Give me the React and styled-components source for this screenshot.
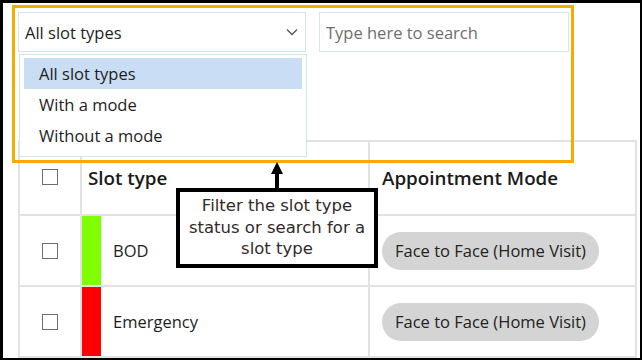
import React from "react";
import styled, { createGlobalStyle } from "styled-components";

const GlobalStyle = createGlobalStyle`
  body {
    margin: 0;
    background: #fff;
  }
  * {
    box-sizing: border-box;
  }
`;

const Frame = styled.div`
  position: relative;
  width: 642px;
  height: 360px;
  border-style: solid;
  border-color: #000;
  border-width: 3px 2px 2px 3px;
  padding: 9px 0 0 15px;
  overflow: hidden;
  background: #fff;
  font-family: "Open Sans", "Noto Sans", sans-serif;
  color: #1e1e1e;
`;

const Toolbar = styled.div`
  display: flex;
  gap: 13px;
  height: 40px;
`;

const SelectWrap = styled.div`
  position: relative;
  width: 288px;
`;

const SelectBox = styled.div`
  display: flex;
  align-items: center;
  justify-content: space-between;
  height: 40px;
  padding: 0 7px 0 6px;
  border: 1px solid #d3e4ea;
  font-size: 16.5px;
`;

const Chevron = styled.svg`
  width: 12px;
  height: 8px;
`;

const Menu = styled.ul`
  position: absolute;
  left: 1px;
  top: 42px;
  width: 288px;
  height: 103px;
  margin: 0;
  padding: 3px 4px 0 4px;
  list-style: none;
  background: #fff;
  border: 1px solid #d3e4ea;
  z-index: 2;
`;

const MenuItem = styled.li`
  height: 31px;
  display: flex;
  align-items: center;
  padding-left: 15px;
  font-size: 16.5px;
  background: ${(p) => (p.$active ? "#c9ddf4" : "transparent")};
`;

const SearchInput = styled.input`
  width: 250px;
  height: 40px;
  padding: 0 6px;
  border: 1px solid #d3e4ea;
  font-family: inherit;
  font-size: 16.5px;
  outline: none;
  &::placeholder {
    color: #6e6e6e;
  }
`;

const Table = styled.div`
  margin-top: 88px;
  width: 619px;
  display: grid;
  grid-template-columns: 62px 288px 267px;
  border-left: 2px solid #e2e2e2;
  border-top: 2px solid #e2e2e2;
`;

const Cell = styled.div`
  height: ${(p) => (p.$head ? "74px" : "71px")};
  border-right: 2px solid #e2e2e2;
  border-bottom: 2px solid #e2e2e2;
  display: flex;
  align-items: center;
  justify-content: ${(p) => (p.$center ? "center" : "flex-start")};
  padding-left: ${(p) => p.$pad || 0}px;
  font-size: ${(p) => (p.$head ? "18.8px" : "16.5px")};
  font-weight: ${(p) => (p.$head ? 600 : 400)};
  color: ${(p) => (p.$head ? "#1a1a1a" : "#1e1e1e")};
`;

const Check = styled.span`
  width: 16px;
  height: 16px;
  border: 1.5px solid #6d6d6d;
  background: #fff;
  margin-top: ${(p) => (p.$head ? "-2px" : "0")};
`;

const ColorBar = styled.span`
  align-self: stretch;
  width: 19px;
  margin: 0 12px 0 0;
  background: ${(p) => p.$color};
`;

const Pill = styled.span`
  display: inline-flex;
  align-items: center;
  height: 38px;
  padding: 0 13px;
  border-radius: 19px;
  background: #d4d4d4;
  font-size: 16.5px;
  color: #222;
`;

const Highlight = styled.div`
  position: absolute;
  left: 9px;
  top: 2px;
  width: 562px;
  height: 158px;
  border: 3px solid #f7aa00;
  z-index: 3;
  pointer-events: none;
`;

const Arrow = styled.svg`
  position: absolute;
  left: 266px;
  top: 159px;
  width: 16px;
  height: 30px;
  z-index: 4;
`;

const Callout = styled.div`
  position: absolute;
  left: 173px;
  top: 185px;
  width: 202px;
  height: 80px;
  border: 4px solid #000;
  background: #fff;
  z-index: 4;
  display: flex;
  align-items: center;
  justify-content: center;
  text-align: center;
  font-family: "DejaVu Sans", sans-serif;
  font-size: 16.5px;
  line-height: 21.5px;
  color: #332a2a;
  white-space: nowrap;
  padding-bottom: 1px;
`;

const rows = [
  { name: "BOD", color: "#80ff00" },
  { name: "Emergency", color: "#ff0000" },
];

export default function App() {
  return (
    <>
      <GlobalStyle />
      <Frame>
        <Toolbar>
          <SelectWrap>
            <SelectBox>
              <span>All slot types</span>
              <Chevron viewBox="0 0 12 8">
                <path d="M1 1.5 L6 6.5 L11 1.5" fill="none" stroke="#555" strokeWidth="1.3" />
              </Chevron>
            </SelectBox>
            <Menu>
              <MenuItem $active>All slot types</MenuItem>
              <MenuItem>With a mode</MenuItem>
              <MenuItem>Without a mode</MenuItem>
            </Menu>
          </SelectWrap>
          <SearchInput placeholder="Type here to search" />
        </Toolbar>

        <Table>
          <Cell $head $center>
            <Check $head />
          </Cell>
          <Cell $head $pad={6}>Slot type</Cell>
          <Cell $head $pad={12}>Appointment Mode</Cell>
          {rows.map((r) => (
            <React.Fragment key={r.name}>
              <Cell $center>
                <Check />
              </Cell>
              <Cell>
                <ColorBar $color={r.color} />
                {r.name}
              </Cell>
              <Cell $pad={12}>
                <Pill>Face to Face (Home Visit)</Pill>
              </Cell>
            </React.Fragment>
          ))}
        </Table>

        <Highlight />
        <Arrow viewBox="0 0 16 30">
          <polygon points="8,0 14,12 2,12" fill="#000" />
          <rect x="6" y="10" width="4" height="20" fill="#000" />
        </Arrow>
        <Callout>
          <div>
            Filter the slot type
            <br />
            status or search for a
            <br />
            slot type
          </div>
        </Callout>
      </Frame>
    </>
  );
}
